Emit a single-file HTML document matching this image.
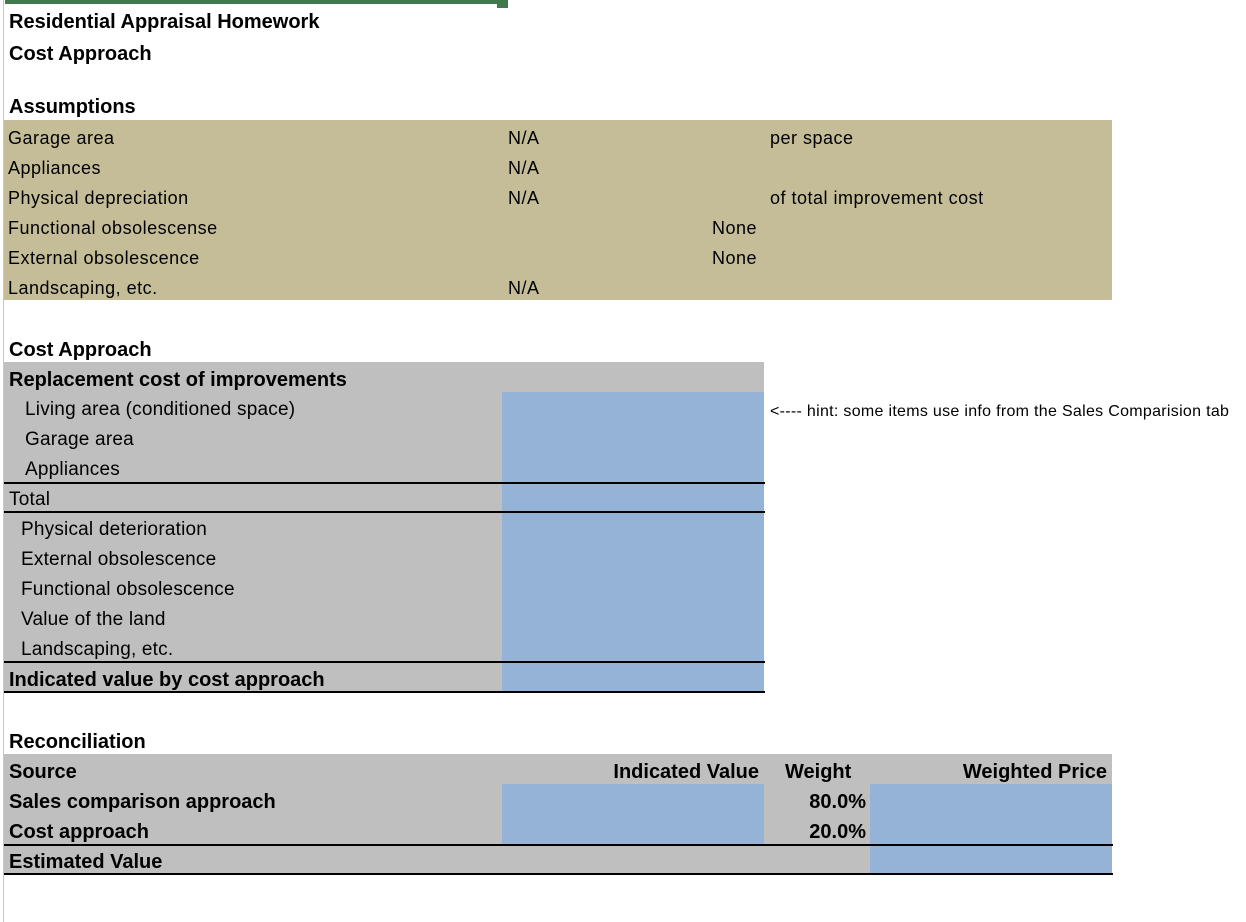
<!DOCTYPE html>
<html><head><meta charset="utf-8"><style>
body{margin:0;width:1246px;height:922px;background:#fff;position:relative;overflow:hidden;font-family:"Liberation Sans",sans-serif;color:#000}
div{position:absolute}
.t{font-size:19px;line-height:30px;white-space:nowrap;letter-spacing:0.2px;margin-top:2px}
.b{font-weight:bold;font-size:20px;letter-spacing:0px}
.n{font-size:18px;letter-spacing:0.5px}
.r{text-align:right}
.tan{background:#c4bd98}.g{background:#bfbfbf}.bl{background:#95b3d7}
.ln{height:2px;background:#000}
</style></head><body>
<div style="left:3px;top:0;width:1px;height:922px;background:#c8c8c8"></div>
<div style="left:5px;top:0;width:492px;height:4px;background:#3f7a4c"></div>
<div style="left:497px;top:0;width:11px;height:8px;background:#3f7a4c"></div>

<div class="t b" style="left:9px;top:5px">Residential Appraisal Homework</div>
<div class="t b" style="left:9px;top:37px">Cost Approach</div>
<div class="t b" style="left:9px;top:90px">Assumptions</div>

<div class="tan" style="left:4px;top:120px;width:1108px;height:180px"></div>
<div class="t n" style="left:8px;top:121px">Garage area</div>
<div class="t n" style="left:8px;top:151px">Appliances</div>
<div class="t n" style="left:8px;top:181px">Physical depreciation</div>
<div class="t n" style="left:8px;top:211px">Functional obsolescense</div>
<div class="t n" style="left:8px;top:241px">External obsolescence</div>
<div class="t n" style="left:8px;top:271px">Landscaping, etc.</div>
<div class="t n" style="left:508px;top:121px">N/A</div>
<div class="t n" style="left:508px;top:151px">N/A</div>
<div class="t n" style="left:508px;top:181px">N/A</div>
<div class="t n" style="left:508px;top:271px">N/A</div>
<div class="t n" style="left:712px;top:211px">None</div>
<div class="t n" style="left:712px;top:241px">None</div>
<div class="t n" style="left:770px;top:121px">per space</div>
<div class="t n" style="left:770px;top:181px">of total improvement cost</div>

<div class="t b" style="left:9px;top:333px">Cost Approach</div>
<div class="g" style="left:4px;top:362px;width:760px;height:330px"></div>
<div class="bl" style="left:502px;top:392px;width:262px;height:300px"></div>
<div class="ln" style="left:4px;top:482px;width:761px"></div>
<div class="ln" style="left:4px;top:511px;width:761px"></div>
<div class="ln" style="left:4px;top:661px;width:761px"></div>
<div class="ln" style="left:4px;top:691px;width:761px"></div>
<div class="t b" style="left:9px;top:363px">Replacement cost of improvements</div>
<div class="t" style="left:25px;top:393px">Living area (conditioned space)</div>
<div class="t" style="left:25px;top:423px">Garage area</div>
<div class="t" style="left:25px;top:453px">Appliances</div>
<div class="t" style="left:9px;top:483px">Total</div>
<div class="t" style="left:21px;top:513px">Physical deterioration</div>
<div class="t" style="left:21px;top:543px">External obsolescence</div>
<div class="t" style="left:21px;top:573px">Functional obsolescence</div>
<div class="t" style="left:21px;top:603px">Value of the land</div>
<div class="t" style="left:21px;top:633px">Landscaping, etc.</div>
<div class="t b" style="left:9px;top:663px">Indicated value by cost approach</div>
<div class="t" style="left:770px;top:395px;font-size:16px;letter-spacing:0.3px">&lt;---- hint: some items use info from the Sales Comparision tab</div>

<div class="t b" style="left:9px;top:725px">Reconciliation</div>
<div class="g" style="left:4px;top:754px;width:1108px;height:120px"></div>
<div class="bl" style="left:502px;top:784px;width:262px;height:60px"></div>
<div class="bl" style="left:870px;top:784px;width:242px;height:90px"></div>
<div class="ln" style="left:4px;top:844px;width:1109px"></div>
<div class="ln" style="left:4px;top:873px;width:1109px"></div>
<div class="t b" style="left:9px;top:755px">Source</div>
<div class="t b" style="left:9px;top:785px">Sales comparison approach</div>
<div class="t b" style="left:9px;top:815px">Cost approach</div>
<div class="t b" style="left:9px;top:845px">Estimated Value</div>
<div class="t b r" style="left:540px;top:755px;width:219px">Indicated Value</div>
<div class="t b" style="left:785px;top:755px">Weight</div>
<div class="t b r" style="left:880px;top:755px;width:227px">Weighted Price</div>
<div class="t b r" style="left:770px;top:785px;width:96px">80.0%</div>
<div class="t b r" style="left:770px;top:815px;width:96px">20.0%</div>
</body></html>
